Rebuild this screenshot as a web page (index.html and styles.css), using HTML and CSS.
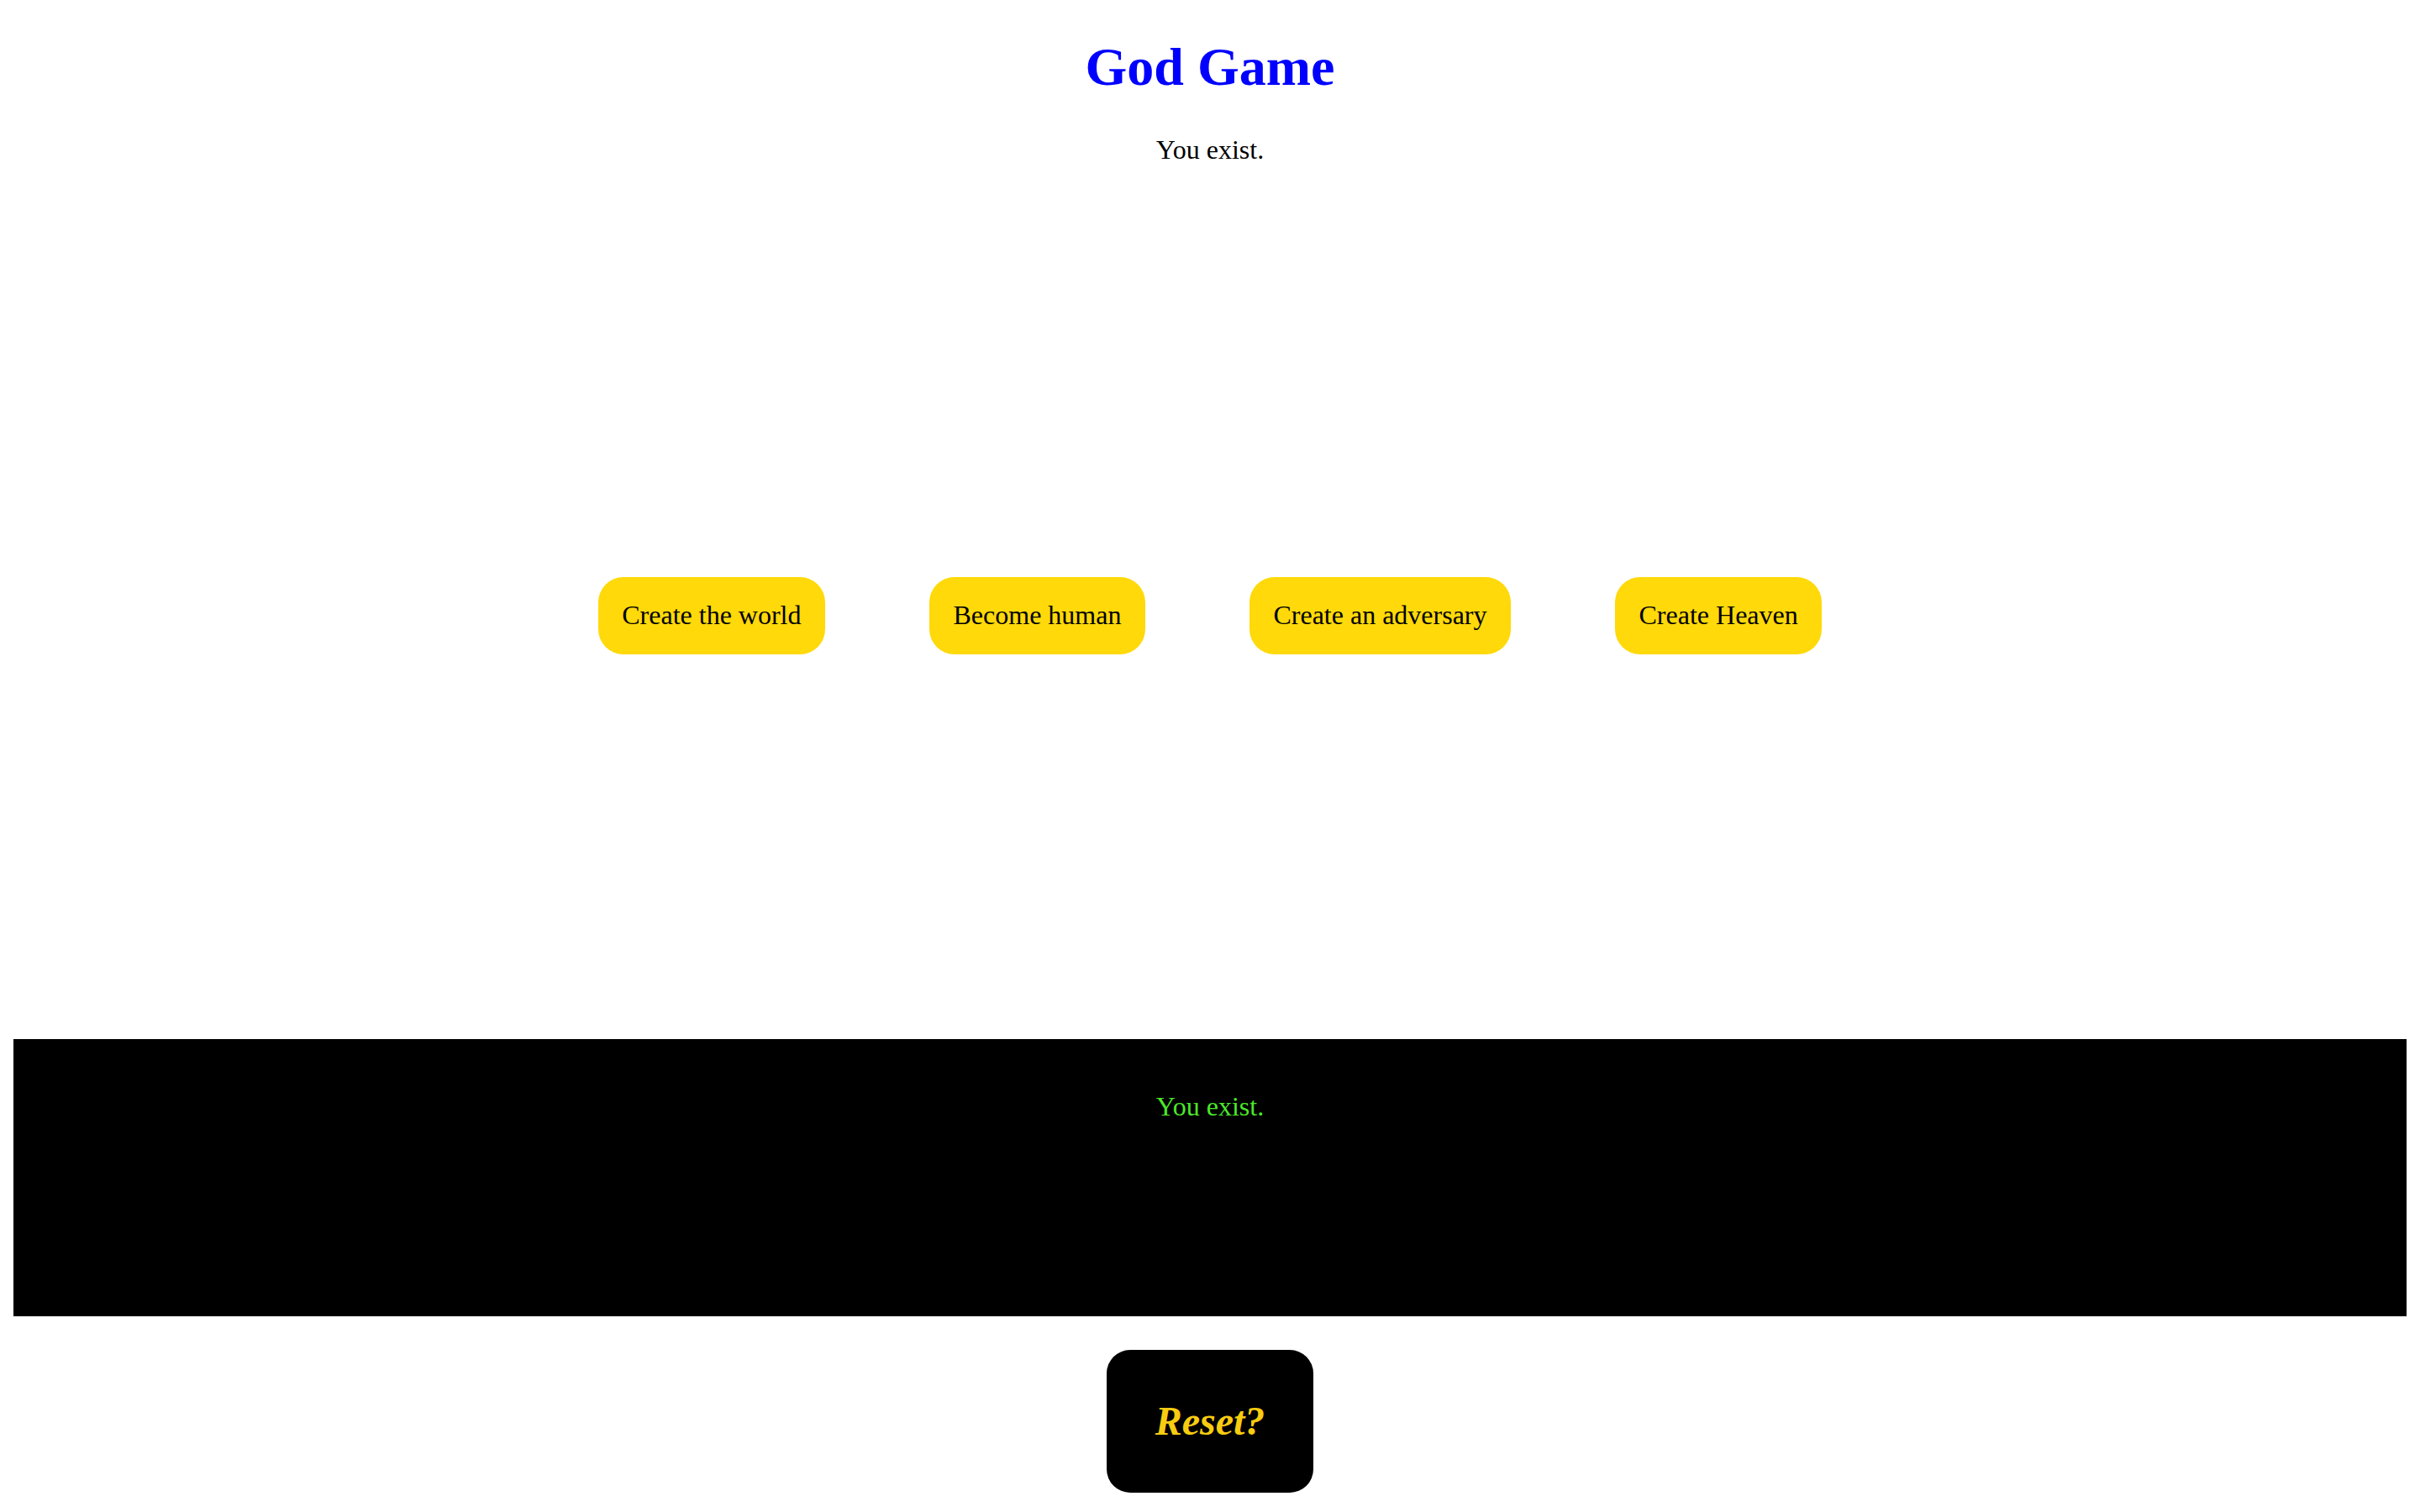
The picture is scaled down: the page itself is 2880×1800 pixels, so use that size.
FILE: index.html
```html
<!DOCTYPE html>
<html lang="en">
<head>
<meta charset="utf-8">
<title>God Game</title>
<link rel="stylesheet" href="styles.css">
</head>
<body>
<h1 class="title">God Game</h1>
<p class="status">You exist.</p>
<div class="choices">
  <button class="choice">Create the world</button>
  <button class="choice">Become human</button>
  <button class="choice">Create an adversary</button>
  <button class="choice">Create Heaven</button>
</div>
<div class="log">
  <p class="log-line">You exist.</p>
</div>
<div class="reset-wrap">
  <button class="reset">Reset?</button>
</div>
</body>
</html>
```
FILE: styles.css
```css
body {
  margin: 0 16px 16px;
  font-family: "Liberation Serif", "Times New Roman", serif;
  font-size: 32px;
  text-align: center;
  background: #fff;
  color: #000;
}
.title {
  font-size: 64px;
  font-weight: bold;
  color: #0000ff;
  margin: 42.88px 0;
}
.status {
  margin: 32px 0;
}
.choices {
  height: 1008px;
  display: flex;
  justify-content: center;
  align-items: center;
  gap: 124px;
}
.choice {
  font-family: "Liberation Serif", "Times New Roman", serif;
  font-size: 32px;
  color: #000;
  background: #ffd909;
  border: none;
  border-radius: 30px;
  padding: 27.5px 28.5px;
  line-height: normal;
}
.log {
  background: #000;
  height: 330px;
  padding-top: 30px;
  box-sizing: border-box;
}
.log-line {
  color: #4ce82a;
  margin: 32px 0;
}
.reset-wrap {
  display: flex;
  justify-content: center;
  margin-top: 40px;
}
.reset {
  font-family: "Liberation Serif", "Times New Roman", serif;
  font-size: 48px;
  font-weight: bold;
  font-style: italic;
  color: #f8cc10;
  background: #000;
  border: none;
  border-radius: 28px;
  padding: 57.6px;
  line-height: normal;
}
```
